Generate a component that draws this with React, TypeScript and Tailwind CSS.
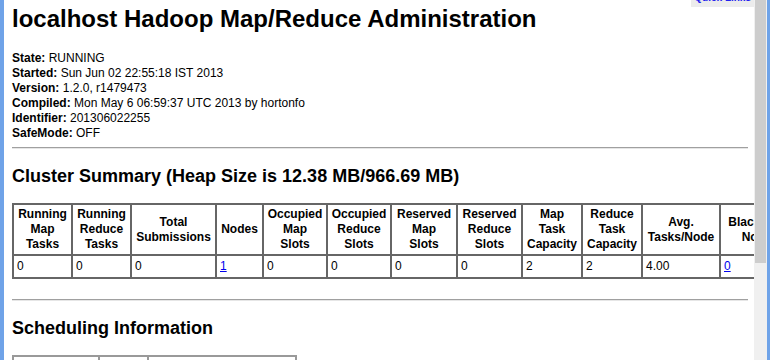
import React from 'react'

const summaryCols = [
  { w: 'w-[59px]', label: ['Running', 'Map', 'Tasks'], value: '0' },
  { w: 'w-[59px]', label: ['Running', 'Reduce', 'Tasks'], value: '0' },
  { w: 'w-[85px]', label: ['Total', 'Submissions'], value: '0' },
  { w: 'w-[47px]', label: ['Nodes'], value: '1', link: true },
  { w: 'w-[64px]', label: ['Occupied', 'Map', 'Slots'], value: '0' },
  { w: 'w-[64px]', label: ['Occupied', 'Reduce', 'Slots'], value: '0' },
  { w: 'w-[66px]', label: ['Reserved', 'Map', 'Slots'], value: '0' },
  { w: 'w-[65px]', label: ['Reserved', 'Reduce', 'Slots'], value: '0' },
  { w: 'w-[60px]', label: ['Map', 'Task', 'Capacity'], value: '2' },
  { w: 'w-[60px]', label: ['Reduce', 'Task', 'Capacity'], value: '2' },
  { w: 'w-[78px]', label: ['Avg.', 'Tasks/Node'], value: '4.00' },
  { w: 'w-[80px]', label: ['Blacklisted', 'Nodes'], value: '0', link: true },
  { w: 'w-[76px]', label: ['Graylisted', 'Nodes'], value: '0', link: true },
  { w: 'w-[70px]', label: ['Excluded', 'Nodes'], value: '0', link: true },
]

const info = [
  ['State:', 'RUNNING'],
  ['Started:', 'Sun Jun 02 22:55:18 IST 2013'],
  ['Version:', '1.2.0, r1479473'],
  ['Compiled:', 'Mon May 6 06:59:37 UTC 2013 by hortonfo'],
  ['Identifier:', '201306022255'],
  ['SafeMode:', 'OFF'],
]

const Rule = () => (
  <div className="h-[2px] border-t border-[#a0a0a0] border-b border-b-[#e6e6e6]" />
)

export default function App() {
  return (
    <div className="flex h-[360px] w-[770px] overflow-hidden bg-white text-black font-['Liberation_Sans',Arial,sans-serif]">
      {/* left window edge */}
      <div className="w-[4px] bg-[#6fa3e8]" />

      {/* page */}
      <div className="relative flex-1 overflow-hidden pl-[8px] pr-[6px]">
        {/* Quick Links tab, scrolled mostly out of view */}
        <div className="absolute right-0 top-[-8px] bg-[#ececec] px-[3px] pb-[3px] text-[10px] leading-[12px] font-bold text-[#2222ee]">
          Quick Links
        </div>

        <h1 className="mt-[5px] text-[24px] leading-[28px] font-bold whitespace-nowrap">
          localhost Hadoop Map/Reduce Administration
        </h1>

        <div className="mt-[18px] text-[12px] leading-[15px]">
          {info.map(([k, v]) => (
            <div key={k}>
              <b>{k}</b> {v}
            </div>
          ))}
        </div>

        <div className="mt-[6px]">
          <Rule />
        </div>

        <h2 className="mt-[16px] text-[18px] leading-[22px] font-bold whitespace-nowrap">
          Cluster Summary (Heap Size is 12.38 MB/966.69 MB)
        </h2>

        <table className="mt-[16px] table-fixed border-collapse border-2 border-[#666] text-[12px] leading-[15px] w-[893px]">
          <colgroup>
            {summaryCols.map((c, i) => (
              <col key={i} className={c.w} />
            ))}
          </colgroup>
          <thead>
            <tr>
              {summaryCols.map((c, i) => (
                <th key={i} className="border-2 border-[#666] px-[3px] py-[2px] text-center align-middle font-bold whitespace-nowrap">
                  {c.label.map((l, j) => (
                    <div key={j}>{l}</div>
                  ))}
                </th>
              ))}
            </tr>
          </thead>
          <tbody>
            <tr>
              {summaryCols.map((c, i) => (
                <td key={i} className="border-2 border-[#666] px-[3px] py-[3px] text-left">
                  {c.link ? (
                    <a href="#" className="text-[#0000ee] underline">{c.value}</a>
                  ) : (
                    c.value
                  )}
                </td>
              ))}
            </tr>
          </tbody>
        </table>

        <div className="mt-[20px]">
          <Rule />
        </div>

        <h2 className="mt-[16px] text-[18px] leading-[22px] font-bold whitespace-nowrap">
          Scheduling Information
        </h2>

        <table className="mt-[16px] border-collapse border-2 border-[#888] text-[12px] leading-[15px]">
          <thead>
            <tr>
              <th className="w-[86px] border-2 border-[#999] px-[3px] py-[2px]">Queue Name</th>
              <th className="w-[49px] border-2 border-[#999] px-[3px] py-[2px]">State</th>
              <th className="w-[148px] border-2 border-[#999] px-[3px] py-[2px]">Scheduling Information</th>
            </tr>
          </thead>
          <tbody>
            <tr>
              <td className="border-2 border-[#999] px-[3px] py-[2px]">default</td>
              <td className="border-2 border-[#999] px-[3px] py-[2px]">running</td>
              <td className="border-2 border-[#999] px-[3px] py-[2px]">N/A</td>
            </tr>
          </tbody>
        </table>
      </div>

      {/* scrollbar */}
      <div className="flex w-[13px] flex-col bg-[#f0f0f0]">
        <div className="mx-[1px] h-[263px] bg-[#cdcdcd]" />
      </div>

      {/* right window edge */}
      <div className="w-[3px] bg-[#6fa3e8]" />
    </div>
  )
}
